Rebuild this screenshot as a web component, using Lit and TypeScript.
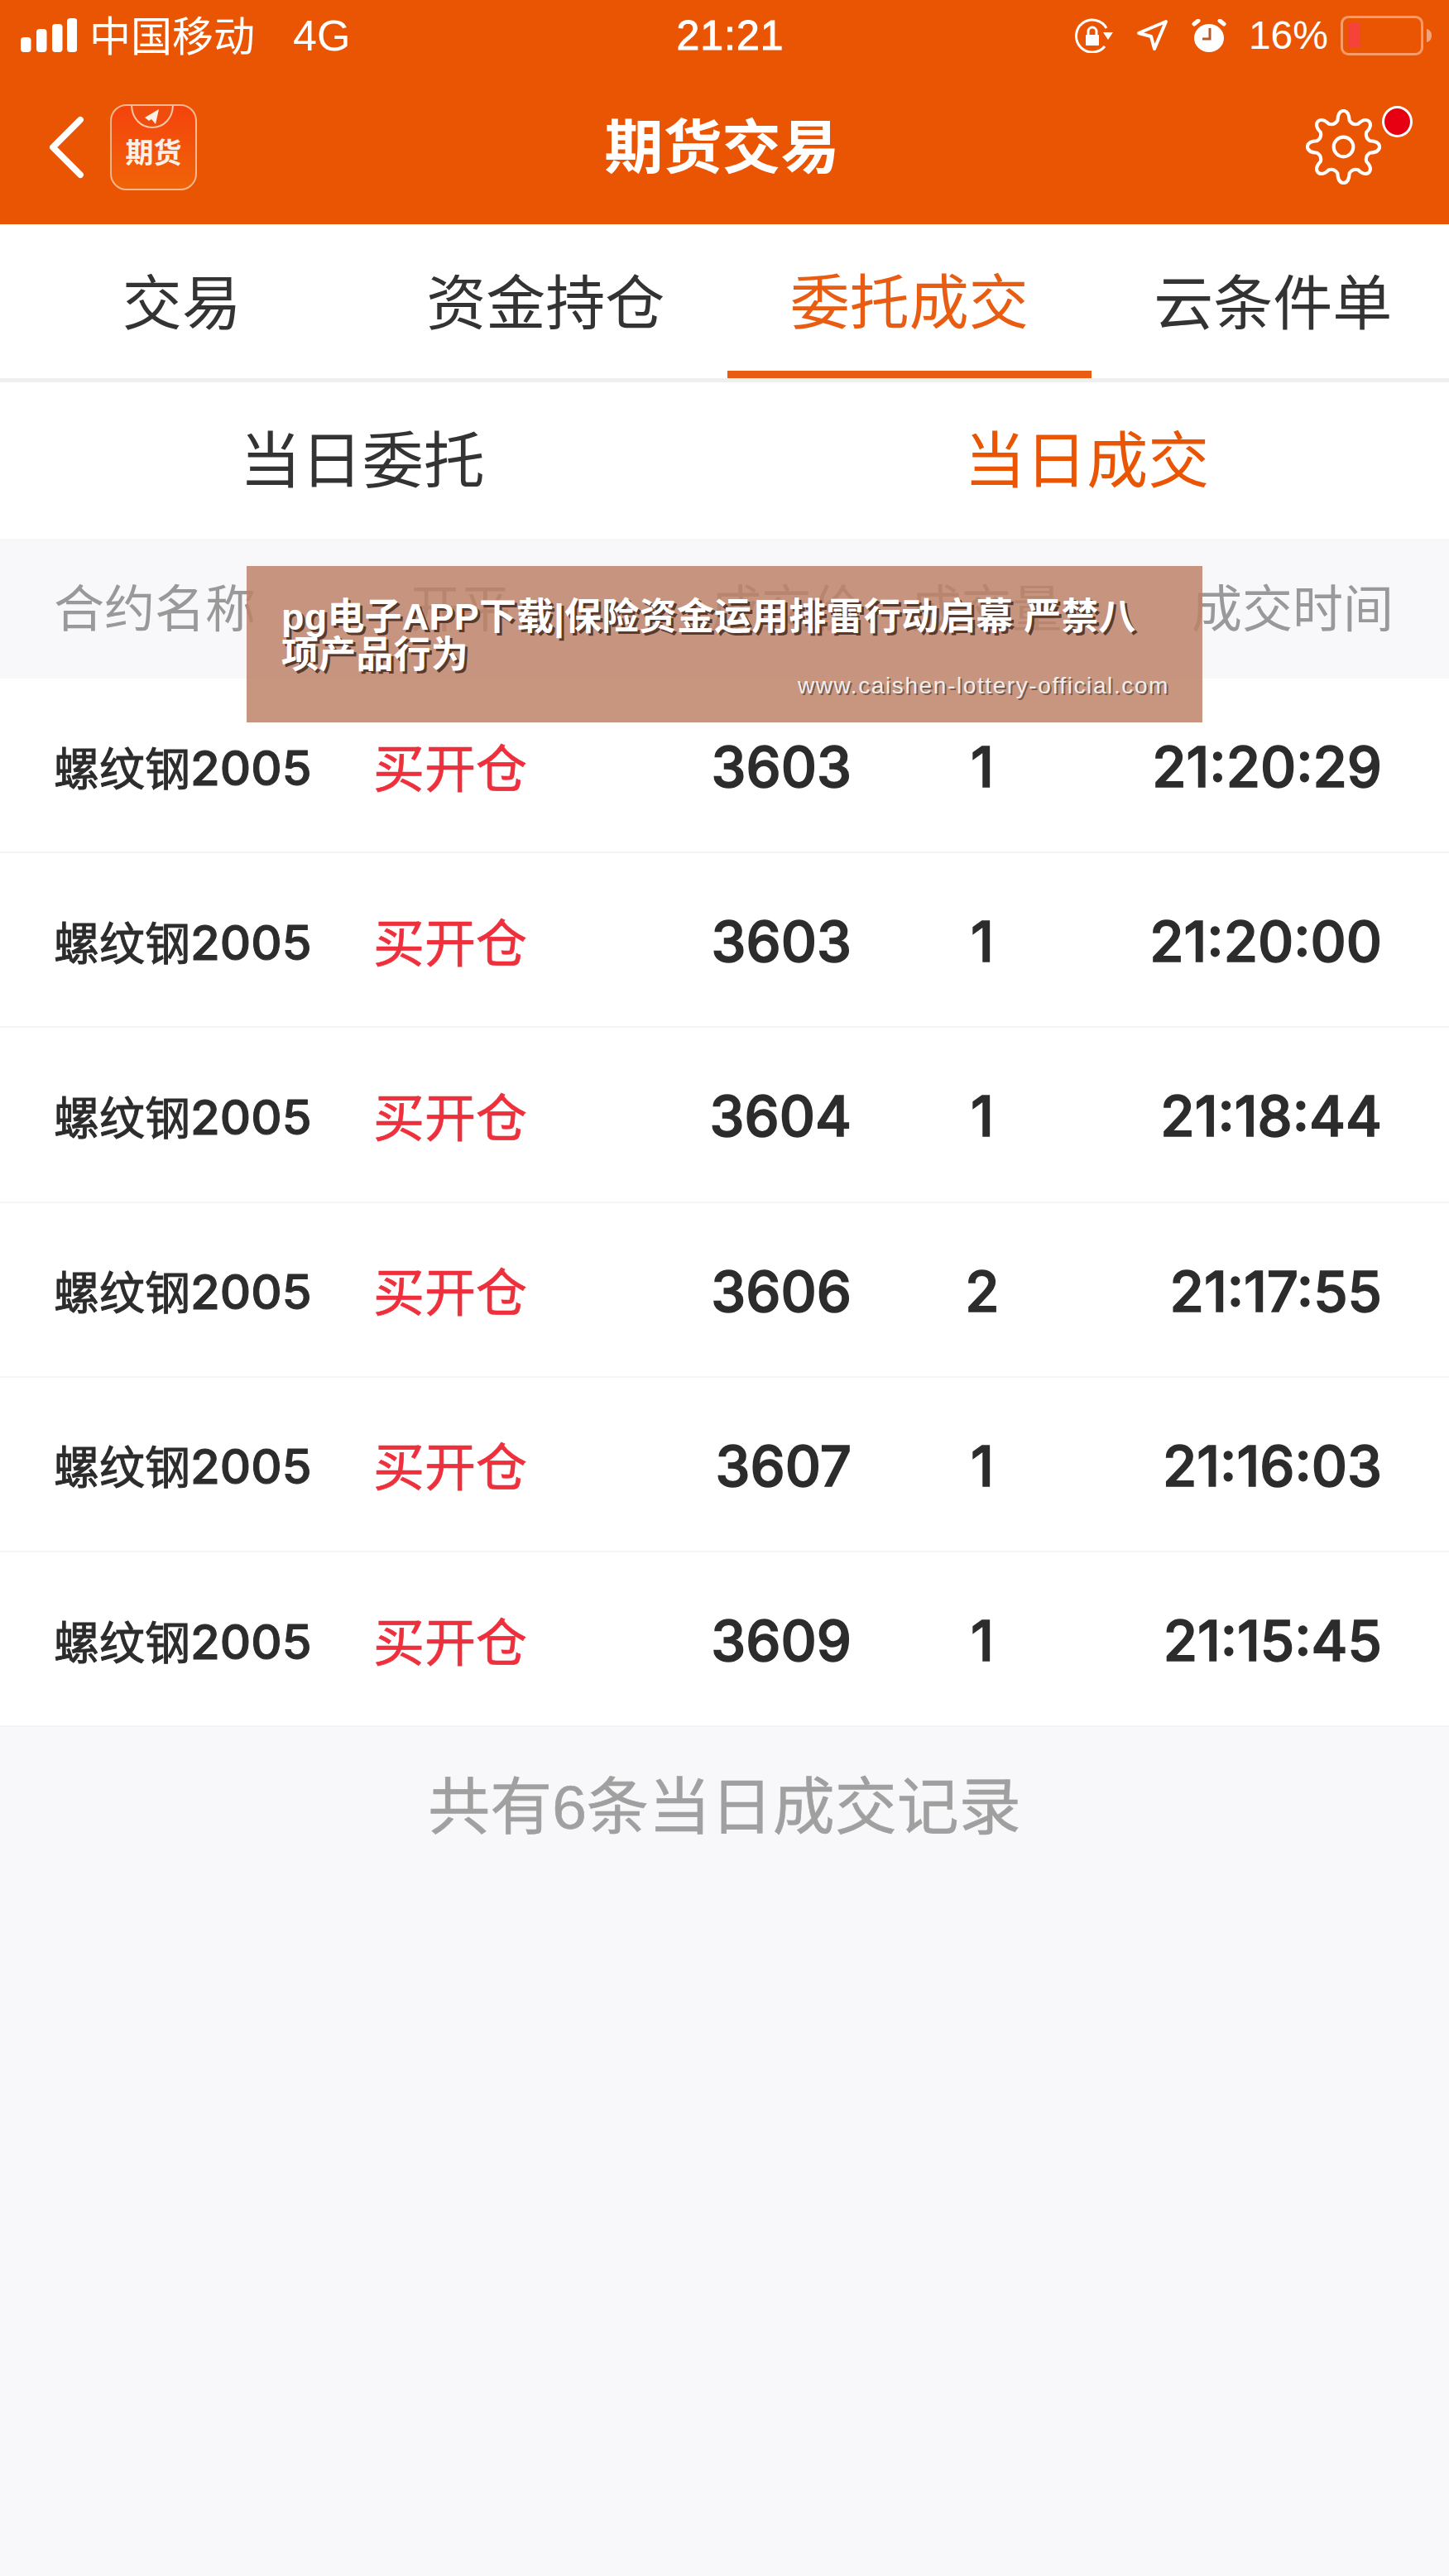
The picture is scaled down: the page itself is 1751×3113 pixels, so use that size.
import { LitElement, html, css, svg } from 'lit';
import { customElement } from 'lit/decorators.js';

const trades = [
  { price: '3603', qty: '1', time: '21:20:29' },
  { price: '3603', qty: '1', time: '21:20:00' },
  { price: '3604', qty: '1', time: '21:18:44' },
  { price: '3606', qty: '2', time: '21:17:55' },
  { price: '3607', qty: '1', time: '21:16:03' },
  { price: '3609', qty: '1', time: '21:15:45' },
];

const gearPath = (() => {
  // 8 teeth gear outline
  const cx = 50, cy = 50, teeth = 8;
  let d = '';
  for (let i = 0; i < teeth; i++) {
    const a = (i / teeth) * Math.PI * 2 - Math.PI / 2;
    const step = (Math.PI * 2) / teeth;
    const p = (r: number, t: number) =>
      `${(cx + r * Math.cos(t)).toFixed(1)} ${(cy + r * Math.sin(t)).toFixed(1)}`;
    d += `${i === 0 ? 'M' : 'L'}${p(36, a - step * 0.28)} `;
    d += `Q${p(48, a - step * 0.2)} ${p(48, a)} Q${p(48, a + step * 0.2)} ${p(36, a + step * 0.28)} `;
    d += `Q${p(31, a + step * 0.5)} ${p(36, a + step * 0.72)} `;
  }
  return d + 'Z';
})();

@customElement('app-root')
export class AppRoot extends LitElement {
  static styles = css`
    :host {
      display: block;
      position: relative;
      width: 1751px;
      height: 3113px;
      overflow: hidden;
      background: #f8f7f9;
      font-family: 'Liberation Sans', 'Noto Sans CJK SC', sans-serif;
      color: #333;
    }
    .topbar {
      height: 271px;
      background: #ea5504;
      color: #fff;
    }
    .status {
      height: 88px;
      display: grid;
      grid-template-columns: 1fr auto 1fr;
      align-items: center;
      padding: 0 20px 3px 25px;
      box-sizing: border-box;
      font-size: 50px;
    }
    .status-left,
    .status-right {
      display: flex;
      align-items: center;
    }
    .status-left svg { margin-right: 15px; }
    .carrier { padding-bottom: 5px; }
    .net { margin-left: 46px; font-size: 52px; }
    .status-right { justify-content: flex-end; }
    .clock {
      font-size: 50px;
      letter-spacing: 1px;
      padding-left: 9px;
      -webkit-text-stroke: 1px #fff;
    }
    .pct { font-size: 48px; margin: 0 15px 0 27px; }
    .status-right svg + svg { margin-left: 28px; }
    .nav {
      height: 183px;
      display: grid;
      grid-template-columns: 1fr auto 1fr;
      align-items: center;
      padding: 0 44px 4px 58px;
      box-sizing: border-box;
    }
    .nav-left { display: flex; align-items: center; gap: 31px; }
    .nav-right { display: flex; justify-content: flex-end; position: relative; }
    .nav-right svg { margin-right: 38px; }
    .title {
      font-size: 71px;
      font-weight: 700;
      padding: 0 20px 12px 0;
    }
    .app-icon {
      width: 105px;
      height: 104px;
      border-radius: 20px;
      box-sizing: border-box;
      border: 2px solid #f7b78f;
      background: linear-gradient(#f4430c, #f06407);
      position: relative;
      overflow: hidden;
      text-align: center;
    }
    .app-icon span {
      display: block;
      margin-top: 37px;
      font-size: 34px;
      line-height: 40px;
      font-weight: 700;
      white-space: nowrap;
      color: #fdf0e8;
    }
    .app-icon svg { position: absolute; left: 0; top: 0; }
    .dot {
      position: absolute;
      right: 0;
      top: -4px;
      width: 37px;
      height: 38px;
      box-sizing: border-box;
      border-radius: 50%;
      background: #e60012;
      border: 3px solid #fff;
    }
    .tabs {
      height: 191px;
      display: grid;
      grid-template-columns: repeat(4, 439.5px);
      background: #fff;
      border-bottom: 5px solid #efeff1;
      box-sizing: border-box;
    }
    .tab {
      display: flex;
      align-items: center;
      justify-content: center;
      font-size: 72px;
      color: #333;
      box-sizing: border-box;
      padding-bottom: 8px;
    }
    .tab.on {
      color: #e85d12;
      border-bottom: 9px solid #e85d12;
      padding-bottom: 0;
    }
    .subtabs {
      height: 189px;
      display: grid;
      grid-template-columns: 1fr 1fr;
      background: #fff;
    }
    .subtab {
      display: flex;
      align-items: center;
      justify-content: center;
      font-size: 74px;
      color: #333;
      padding-bottom: 12px;
    }
    .subtab.on { color: #ea5504; }
    .row {
      display: grid;
      grid-template-columns: 386px 402px 176px 316px 1fr;
      align-items: center;
      padding: 0 81px 0 65px;
      box-sizing: border-box;
      white-space: nowrap;
    }
    .head {
      height: 169px;
      background: #f8f8fa;
      color: #999;
      font-size: 61px;
      padding-bottom: 8px;
    }
    .head div:nth-child(2) { padding-left: 44px; }
    .head div:nth-child(3) { padding-left: 6px; }
    .head div:nth-child(4) { text-align: center; padding-left: 10px; }
    .head div:last-child { text-align: right; margin-right: -14px; }
    .trade {
      height: 211.2px;
      background: #fff;
      border-bottom: 2px solid #f4f4f5;
      color: #2c2c2c;
    }
    .trade:last-of-type { border-bottom: 0; }
    .name {
      font-size: 55px;
      -webkit-text-stroke: 1px #2c2c2c;
    }
    .name b {
      font-family: Inter, 'Liberation Sans', sans-serif;
      font-weight: 500;
      font-size: 58px;
      -webkit-text-stroke: 1px #2c2c2c;
    }
    .side {
      color: #ee2f3c;
      font-size: 62px;
      -webkit-text-stroke: 0.7px #ee2f3c;
    }
    .num {
      font-family: Inter, 'Liberation Sans', sans-serif;
      font-size: 67px;
      font-weight: 500;
      color: #2c2c2c;
      padding-top: 4px;
      -webkit-text-stroke: 1.5px #2c2c2c;
    }
    .price { text-align: right; }
    .qty { text-align: center; }
    .time { text-align: right; }
    .summary {
      text-align: center;
      color: #a0a0a0;
      font-size: 75px;
      line-height: 100px;
      padding: 47px 0 0;
      -webkit-text-stroke: 0.6px #a0a0a0;
    }
    .notice {
      position: absolute;
      left: 298px;
      top: 684px;
      width: 1155px;
      height: 189px;
      box-sizing: border-box;
      padding: 39px 40px 0 42px;
      background: rgba(190, 130, 102, 0.84);
      color: #fff;
      text-shadow: 3px 3px 0 #5a3a2c;
    }
    .headline {
      font-size: 45px;
      line-height: 46px;
      font-weight: 700;
      width: 1040px;
      letter-spacing: 0.2px;
    }
    .url {
      text-align: right;
      font-size: 28px;
      line-height: 30px;
      letter-spacing: 1.6px;
      margin-top: -1px;
      color: #eee;
      text-shadow: 2px 2px 0 #7a5a4c;
    }
  `;

  private renderSignal() {
    return html`<svg width="68" height="41" viewBox="0 0 68 41">
      ${[
        [0, 23, 18],
        [19, 13, 28],
        [38, 7, 34],
        [56, 0, 41],
      ].map(([x, y, h]) => svg`<rect x=${x} y=${y} width="12.5" height=${h} rx="4" fill="#fff"></rect>`)}
    </svg>`;
  }

  private renderStatusIcons() {
    return html`
      <svg width="46" height="42" viewBox="0 0 46 42" fill="none" stroke="#fff" stroke-width="3">
        <path d="M36 34A19.500 19.500 0 1 1 38 12"></path>
        <path d="M34 17h12l-6 9z" fill="#fff" stroke="none"></path>
        <rect x="13" y="20" width="16" height="13" rx="1" fill="#fff" stroke="none"></rect>
        <path d="M16 20v-4a5 5 0 0 1 10 0v4"></path>
      </svg>
      <svg width="39" height="40" viewBox="0 0 39 40" fill="none" stroke="#fff" stroke-width="4" stroke-linejoin="round">
        <path d="M36 3 3 17 18 21 22 36z"></path>
      </svg>
      <svg width="42" height="40" viewBox="0 0 42 40">
        <ellipse cx="21" cy="23" rx="18" ry="17" fill="#fff"></ellipse>
        <path d="M3 6 8 2M39 6 34 2" stroke="#fff" stroke-width="5" stroke-linecap="round"></path>
        <path d="M22 11v13h-9" fill="none" stroke="#b65a2a" stroke-width="3"></path>
      </svg>
    `;
  }

  private renderBattery() {
    return html`<svg width="111" height="48" viewBox="0 0 111 48">
      <rect x="1.500" y="1.500" width="97" height="45" rx="8" fill="none" stroke="#f79b6b" stroke-width="3"></rect>
      <rect x="9" y="9" width="15" height="30" fill="#f5433a"></rect>
      <path d="M104 16c4 1 6 4 6 8s-2 7-6 8z" fill="#f4a47a"></path>
    </svg>`;
  }

  render() {
    return html`
      <div class="topbar">
        <div class="status">
          <div class="status-left">
            ${this.renderSignal()}
            <span class="carrier">中国移动</span>
            <span class="net">4G</span>
          </div>
          <div class="clock">21:21</div>
          <div class="status-right">
            ${this.renderStatusIcons()}
            <span class="pct">16%</span>
            ${this.renderBattery()}
          </div>
        </div>
        <div class="nav">
          <div class="nav-left">
            <svg width="44" height="76" viewBox="0 0 46 80" fill="none" stroke="#fff" stroke-width="8" stroke-linecap="round" stroke-linejoin="round">
              <path d="M41 5 6 40l35 35"></path>
            </svg>
            <div class="app-icon">
              <svg width="100" height="40" viewBox="0 0 100 40">
                <path d="M24 -2c0 18 12 28 25 28S74 16 74 -2" fill="#ee4d0d" stroke="#fbc7a6" stroke-width="2"></path>
                <path d="M40 14 57 4l-4 18-5-6-3 2z" fill="#fdeee6"></path>
              </svg>
              <span>期货</span>
            </div>
          </div>
          <div class="title">期货交易</div>
          <div class="nav-right">
            <svg width="91" height="91" viewBox="0 0 100 100" fill="none" stroke="#fff" stroke-width="4.500">
              <path d=${gearPath}></path>
              <circle cx="50" cy="50" r="13"></circle>
            </svg>
            <span class="dot"></span>
          </div>
        </div>
      </div>
      <div class="tabs">
        <div class="tab">交易</div>
        <div class="tab">资金持仓</div>
        <div class="tab on">委托成交</div>
        <div class="tab">云条件单</div>
      </div>
      <div class="subtabs">
        <div class="subtab">当日委托</div>
        <div class="subtab on">当日成交</div>
      </div>
      <div class="row head">
        <div>合约名称</div>
        <div>开平</div>
        <div>成交价</div>
        <div>成交量</div>
        <div>成交时间</div>
      </div>
      ${trades.map(
        (t) => html`<div class="row trade">
          <div class="name">螺纹钢<b>2005</b></div>
          <div class="side">买开仓</div>
          <div class="num price">${t.price}</div>
          <div class="num qty">${t.qty}</div>
          <div class="num time">${t.time}</div>
        </div>`,
      )}
      <div class="summary">共有6条当日成交记录</div>
      <div class="notice">
        <div class="headline">pg电子APP下载|保险资金运用排雷行动启幕 严禁八项产品行为</div>
        <div class="url">www.caishen-lottery-official.com</div>
      </div>
    `;
  }
}
